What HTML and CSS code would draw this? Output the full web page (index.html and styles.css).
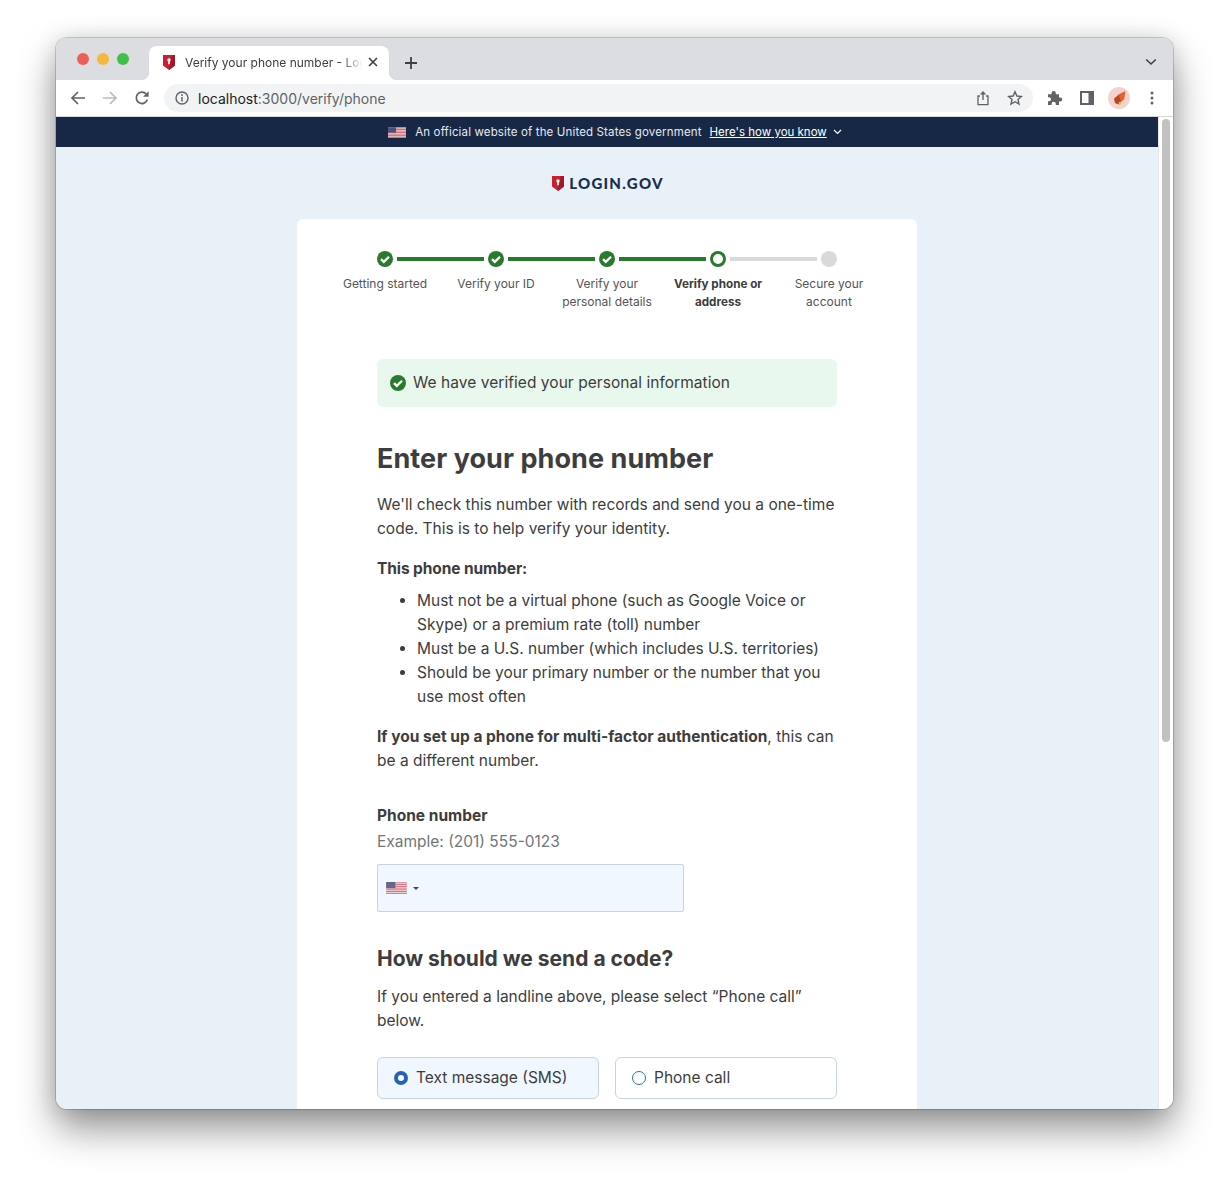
FILE: index.html
```html
<!DOCTYPE html>
<html lang="en">
<head>
    <meta charset="UTF-8">
    <title>Verify your phone number - Login.gov</title>
    <link rel="stylesheet" href="styles.css">
</head>
<body>
    <svg class="defs" width="0" height="0">
        <symbol id="flag" viewBox="0 0 19 11">
            <rect width="19" height="11" fill="#f4f2f2"/>
            <path d="M0 .8h19M0 2.4h19M0 4h19M0 5.6h19M0 7.2h19M0 8.8h19M0 10.4h19" stroke="#c9505a" stroke-width=".9"/>
            <rect width="8.5" height="5.6" fill="#4a4f80"/>
        </symbol>
        <symbol id="shield" viewBox="0 0 12 15">
            <path d="M0 0h12v10.5L6 15 0 10.5z" fill="#c8202f"/>
            <path d="M9 0h3v10.5L6 15v-3z" fill="#a5172a"/>
            <circle cx="6" cy="5" r="1.7" fill="#fff"/>
            <path d="M5.2 5.5h1.6v3.7H5.2z" fill="#fff"/>
        </symbol>
        <symbol id="check" viewBox="0 0 16 16">
            <circle cx="8" cy="8" r="8" fill="#2a7a2e"/>
            <path d="M4 8.100l2.800 2.800 5.200-5.200" fill="none" stroke="#fff" stroke-width="2.300"/>
        </symbol>
    </svg>

    <div class="window">
        <!-- Tabs -->
        <div class="tabstrip">
            <div class="lights">
                <span class="light red"></span>
                <span class="light yellow"></span>
                <span class="light green"></span>
            </div>
            <div class="tab">
                <svg class="favicon" width="12" height="15"><use href="#shield"/></svg>
                <span class="tab-title">Verify your phone number - Login.gov</span>
                <svg class="tab-close" width="10" height="10" viewBox="0 0 10 10"><path d="M1 1l8 8M9 1l-8 8" stroke="#3c4043" stroke-width="1.6"/></svg>
            </div>
            <svg class="new-tab" width="14" height="14" viewBox="0 0 14 14"><path d="M7 1v12M1 7h12" stroke="#3c4043" stroke-width="1.8"/></svg>
            <svg class="tab-menu" width="12" height="8" viewBox="0 0 12 8"><path d="M1.2 1.5L6 6l4.8-4.5" fill="none" stroke="#3c4043" stroke-width="1.6"/></svg>
        </div>

        <!-- Toolbar -->
        <div class="toolbar">
            <span class="tool"><svg width="16" height="16" viewBox="0 0 16 16"><path d="M15 8H2M8 2L2 8l6 6" fill="none" stroke="#5f6368" stroke-width="1.7"/></svg></span>
            <span class="tool"><svg width="16" height="16" viewBox="0 0 16 16"><path d="M1 8h13M8 2l6 6-6 6" fill="none" stroke="#bababa" stroke-width="1.7"/></svg></span>
            <span class="tool"><svg width="16" height="16" viewBox="0 0 16 16"><path d="M13.4 9.6A5.7 5.7 0 1 1 12.2 4" fill="none" stroke="#5f6368" stroke-width="1.7"/><path d="M14.6 1.2v5.6H9z" fill="#5f6368"/></svg></span>
            <div class="omnibox">
                <svg class="info" width="14" height="14" viewBox="0 0 14 14"><circle cx="7" cy="7" r="6" fill="none" stroke="#5f6368" stroke-width="1.4"/><path d="M7 6v4.4" stroke="#5f6368" stroke-width="1.5"/><circle cx="7" cy="4" r=".9" fill="#5f6368"/></svg>
                <span class="url">localhost<span class="url-path">:3000/verify/phone</span></span>
                <span class="tool"><svg width="14" height="16" viewBox="0 0 14 16"><path d="M4 6H2v8.6h10V6h-2" fill="none" stroke="#5f6368" stroke-width="1.3"/><path d="M7 10V2" stroke="#5f6368" stroke-width="1.4"/><path d="M3.8 4.4L7 1l3.2 3.4z" fill="#5f6368"/></svg></span>
                <span class="tool"><svg width="16" height="16" viewBox="0 0 16 16"><path d="M8 1.8l1.9 4.2 4.5.5-3.4 3 1 4.5L8 11.7 4 14l1-4.500-3.400-3 4.500-.5z" fill="none" stroke="#5f6368" stroke-width="1.4"/></svg></span>
            </div>
            <span class="tool"><svg width="16" height="16" viewBox="0 0 16 16"><path d="M1 4.200h3.600V3a2.100 2.100 0 1 1 4.200 0v1.200H12v3.200h1.100a2.100 2.100 0 1 1 0 4.200H12V15H8.800v-1.200a2.100 2.100 0 1 0-4.200 0V15H1v-3.800h1a2 2 0 1 0 0-4H1z" fill="#5f6368"/></svg></span>
            <span class="tool"><svg width="14" height="14" viewBox="0 0 14 14"><path d="M0 0h14v14H0z" fill="#5f6368"/><path d="M2 2h6.5v10H2z" fill="#fff"/></svg></span>
            <span class="tool"><svg width="22" height="22" viewBox="0 0 22 22"><circle cx="11" cy="11" r="11" fill="#f6d2cf"/><path d="M9.500 8L17.500 4l-1.300 8-3.700 3.500z" fill="#e2622a"/><path d="M6 11.500l4.500-3.500 2.500 6.500-2.500 3-3.500-1.500z" fill="#b5481d"/><path d="M10.500 15.500l2-1 .8 2.500-2 1z" fill="#e9b84f"/></svg></span>
            <span class="tool"><svg width="4" height="14" viewBox="0 0 4 14"><circle cx="2" cy="2" r="1.5" fill="#5f6368"/><circle cx="2" cy="7" r="1.5" fill="#5f6368"/><circle cx="2" cy="12" r="1.5" fill="#5f6368"/></svg></span>
        </div>

        <div class="viewport">
            <div class="page">
                <div class="gov-banner">
                    <svg class="gov-flag" width="18" height="11"><use href="#flag"/></svg>
                    <span class="gov-text">An official website of the United States government</span>
                    <a class="gov-link" href="#">Here's how you know</a>
                    <svg width="9" height="6" viewBox="0 0 9 6"><path d="M1 1l3.500 3.500L8 1" fill="none" stroke="#fff" stroke-width="1.2"/></svg>
                </div>

                <div class="logo">
                    <svg width="12" height="15"><use href="#shield"/></svg>
                    <span class="logo-text">LOGIN.GOV</span>
                </div>

                <main class="card">
                    <!-- Pasos -->
                    <ol class="steps">
                        <li class="step done">
                            <div class="track"><i class="seg blank"></i><svg width="16" height="16"><use href="#check"/></svg><i class="seg"></i></div>
                            <span class="step-label">Getting started</span>
                        </li>
                        <li class="step done">
                            <div class="track"><i class="seg"></i><svg width="16" height="16"><use href="#check"/></svg><i class="seg"></i></div>
                            <span class="step-label">Verify your ID</span>
                        </li>
                        <li class="step done">
                            <div class="track"><i class="seg"></i><svg width="16" height="16"><use href="#check"/></svg><i class="seg"></i></div>
                            <span class="step-label">Verify your<br>personal details</span>
                        </li>
                        <li class="step current">
                            <div class="track"><i class="seg"></i><b class="dot"></b><i class="seg todo"></i></div>
                            <span class="step-label">Verify phone or<br>address</span>
                        </li>
                        <li class="step">
                            <div class="track"><i class="seg todo"></i><b class="dot todo"></b><i class="seg blank"></i></div>
                            <span class="step-label">Secure your<br>account</span>
                        </li>
                    </ol>

                    <div class="content">
                        <div class="alert">
                            <svg width="16" height="16"><use href="#check"/></svg>
                            <span>We have verified your personal information</span>
                        </div>

                        <h1>Enter your phone number</h1>
                        <p class="intro">We'll check this number with records and send you a one-time code. This is to help verify your identity.</p>
                        <p class="lead"><strong>This phone number:</strong></p>
                        <ul>
                            <li>Must not be a virtual phone (such as Google Voice or Skype) or a premium rate (toll) number</li>
                            <li>Must be a U.S. number (which includes U.S. territories)</li>
                            <li>Should be your primary number or the number that you use most often</li>
                        </ul>
                        <p><strong>If you set up a phone for multi-factor authentication</strong>, this can be a different number.</p>

                        <label class="field-label">Phone number</label>
                        <div class="hint">Example: (201) 555-0123</div>
                        <div class="phone-input">
                            <svg class="input-flag" width="21" height="12"><use href="#flag"/></svg>
                            <i class="caret"></i>
                        </div>

                        <h2>How should we send a code?</h2>
                        <p>If you entered a landline above, please select “Phone call” below.</p>

                        <div class="radios">
                            <div class="radio selected"><i class="radio-mark"></i><span>Text message (SMS)</span></div>
                            <div class="radio"><i class="radio-mark"></i><span>Phone call</span></div>
                        </div>
                    </div>
                </main>
            </div>
            <div class="scrollbar"><div class="thumb"></div></div>
        </div>
    </div>
</body>
</html>
```

FILE: styles.css
```css
html, body {
    margin: 0;
    padding: 0;
    height: 100%;
    overflow: hidden;
    background: #fff;
}

body {
    font-family: Inter, "Liberation Sans", sans-serif;
    color: #3d3d3d;
    padding: 38px 0 0 56px;
    box-sizing: border-box;
}

.defs {
    display: block;
    height: 0;
}

/* Ventana */
.window {
    width: 1117px;
    height: 1071px;
    border-radius: 11px;
    overflow: hidden;
    display: flex;
    flex-direction: column;
    box-shadow: 0 0 0 1px rgba(0, 0, 0, .16), 0 20px 38px rgba(0, 0, 0, .42), 0 0 22px rgba(0, 0, 0, .12);
}

.tabstrip {
    height: 42px;
    flex: none;
    background: #dcdde1;
    display: flex;
    align-items: flex-end;
    box-sizing: border-box;
    padding-left: 21px;
}

.lights {
    display: flex;
    gap: 8px;
    align-self: flex-start;
    margin-top: 15px;
}

.light {
    width: 12px;
    height: 12px;
    border-radius: 50%;
}

.red { background: #ed5f56; }
.yellow { background: #f6b83c; }
.green { background: #3fc04a; }

.tab {
    position: relative;
    width: 240px;
    height: 34px;
    margin-left: 20px;
    box-sizing: border-box;
    padding: 0 11px 2px 14px;
    background: #fff;
    border-radius: 8px 8px 0 0;
    display: flex;
    align-items: center;
    font-size: 12px;
    color: #3c4043;
}

.tab::before, .tab::after {
    content: "";
    position: absolute;
    bottom: 0;
    width: 8px;
    height: 8px;
}

.tab::before {
    left: -8px;
    background: radial-gradient(circle at 0 0, transparent 8px, #fff 8.5px);
}

.tab::after {
    right: -8px;
    background: radial-gradient(circle at 100% 0, transparent 8px, #fff 8.5px);
}

.favicon {
    flex: none;
}

.tab-title {
    flex: 1;
    min-width: 0;
    height: 18px;
    line-height: 18px;
    margin: 2px 5px 0 10px;
    white-space: nowrap;
    overflow: hidden;
    -webkit-mask-image: linear-gradient(to right, #000 88%, transparent);
    mask-image: linear-gradient(to right, #000 88%, transparent);
}

.tab-close {
    flex: none;
}

.new-tab {
    margin: 0 0 10px 15px;
}

.tab-menu {
    margin: 0 16px 14px auto;
}

.toolbar {
    height: 37px;
    flex: none;
    background: #fff;
    border-bottom: 1px solid #d4d6d8;
    box-sizing: border-box;
    padding: 0 5px 0 6px;
    display: flex;
    align-items: center;
}

.tool {
    width: 32px;
    height: 28px;
    flex: none;
    display: flex;
    align-items: center;
    justify-content: center;
}

.toolbar > .tool:last-child {
    margin-left: 1px;
}

.omnibox {
    flex: 1;
    height: 28px;
    margin: 0 6px;
    padding: 0 2px 0 11px;
    background: #f1f3f4;
    border-radius: 14px;
    display: flex;
    align-items: center;
}

.info {
    flex: none;
}

.url {
    flex: 1;
    margin-left: 9px;
    font-size: 14px;
    color: #202124;
}

.url-path {
    color: #5f6368;
}

.viewport {
    flex: 1;
    min-height: 0;
    display: flex;
}

.page {
    flex: 1;
    background: #e8f0f8;
    overflow: hidden;
}

.scrollbar {
    width: 15px;
    flex: none;
    box-sizing: border-box;
    background: #fff;
    border-left: 1px solid #e8e8e8;
    padding: 2px 3px 0 3px;
}

.thumb {
    height: 623px;
    background: #c1c1c1;
    border-radius: 4px;
}

/* Cabecera de la página */
.gov-banner {
    height: 30px;
    box-sizing: border-box;
    padding-left: 16px;
    background: #162846;
    color: #fff;
    font-size: 11.500px;
    display: flex;
    align-items: center;
    justify-content: center;
}

.gov-flag {
    margin-right: 9px;
}

.gov-text {
    letter-spacing: .14px;
    color: #e6e9ee;
}

.gov-link {
    color: #fff;
    margin: 0 6px 0 8px;
}

.logo {
    height: 72px;
    box-sizing: border-box;
    padding-left: 2px;
    display: flex;
    align-items: center;
    justify-content: center;
    gap: 5px;
}

.logo-text {
    font-family: Lato, sans-serif;
    font-weight: 900;
    font-size: 15px;
    line-height: 15px;
    letter-spacing: 1.28px;
    color: #162e51;
}

.card {
    width: 620px;
    margin: 0 auto;
    background: #fff;
    border-radius: 6px 6px 0 0;
    padding-top: 32px;
}

/* Pasos */
.steps {
    list-style: none;
    margin: 0 0 0 33px;
    padding: 0;
    display: flex;
}

.step {
    width: 111px;
    flex: none;
    text-align: center;
    font-size: 12px;
    line-height: 18px;
    color: #555;
}

.step.current {
    font-weight: 700;
    font-size: 11.700px;
    color: #3d3d3d;
}

.step-label {
    display: block;
    padding-right: 1px;
}

.track {
    height: 16px;
    margin-bottom: 8px;
    display: flex;
    align-items: center;
    gap: 4px;
}

.seg {
    width: 43px;
    height: 4px;
    flex: none;
    background: #2a7a2e;
}

.seg:last-child {
    width: 44px;
}

.seg.todo {
    background: #d9d9d9;
}

.seg.blank {
    visibility: hidden;
}

.dot {
    width: 16px;
    height: 16px;
    flex: none;
    box-sizing: border-box;
    border-radius: 50%;
    border: 3px solid #2a7a2e;
    background: #fff;
}

.dot.todo {
    border: 0;
    background: #d9d9d9;
}

/* Contenido */
.content {
    padding: 48px 80px 60px;
    font-size: 15.500px;
    line-height: 24px;
}

.alert {
    height: 48px;
    box-sizing: border-box;
    padding-left: 13px;
    background: #e9f8ec;
    border-radius: 6px;
    letter-spacing: .05px;
    display: flex;
    align-items: center;
    gap: 7px;
}

h1 {
    font-size: 27px;
    line-height: 36px;
    font-weight: 700;
    letter-spacing: .06px;
    margin: 34px 0 16px;
}

p {
    margin: 0 0 16px;
}

p.lead {
    margin-bottom: 8px;
    letter-spacing: -.1px;
}

ul {
    margin: 0 0 16px;
    padding-left: 40px;
}

.field-label {
    display: block;
    margin-top: 31px;
    font-weight: 700;
}

.hint {
    margin-top: 2px;
    color: #71767a;
}

.phone-input {
    width: 307px;
    height: 48px;
    margin-top: 10px;
    box-sizing: border-box;
    border: 1px solid #c5d3e8;
    border-radius: 2px;
    background: #f0f7ff;
    padding-left: 8px;
    display: flex;
    align-items: center;
    gap: 6px;
}

.input-flag {
    opacity: .85;
}

.caret {
    border: 3px solid transparent;
    border-top: 3.500px solid #444;
    border-bottom: 0;
}

h2 {
    font-size: 21px;
    line-height: 28px;
    font-weight: 700;
    margin: 33px 0 12px;
}

.radios {
    display: flex;
    gap: 16px;
    margin-top: 24px;
}

.radio {
    flex: 1;
    height: 42px;
    box-sizing: border-box;
    border: 1px solid #c5d3e8;
    border-radius: 6px;
    padding-left: 16px;
    display: flex;
    align-items: center;
    gap: 8px;
}

.radio.selected {
    background: #f0f7ff;
}

.radio-mark {
    width: 14px;
    height: 14px;
    flex: none;
    box-sizing: border-box;
    border-radius: 50%;
    border: 1.500px solid #2e6ebc;
    background: #fff;
}

.selected .radio-mark {
    border: 4px solid #2563b5;
}
```
